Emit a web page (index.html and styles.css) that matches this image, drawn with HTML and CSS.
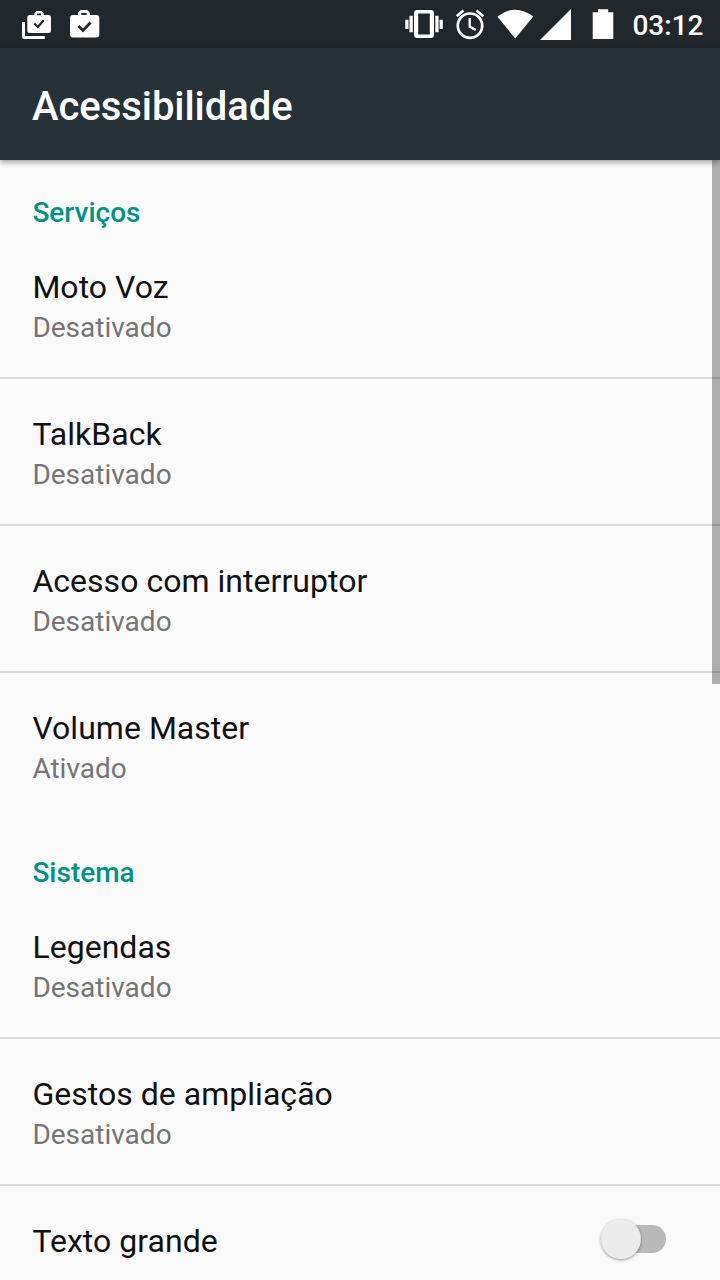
FILE: index.html
```html
<!DOCTYPE html>
<html lang="pt-BR">
<head>
<meta charset="utf-8">
<title>Acessibilidade</title>
<link rel="stylesheet" href="styles.css">
</head>
<body>
<div class="screen">
  <header class="status-bar">
    <svg class="status-icons" width="620" height="48" viewBox="0 0 620 48" fill="#fff" aria-hidden="true">
      <path d="M22 22h3v14h19.7v3H24.5a2.5 2.5 0 0 1-2.5-2.5z"/>
      <path fill-rule="evenodd" d="M34.3 15v-1.700l2.200-2.300h5l2.200 2.300V15H48.500a2.500 2.500 0 0 1 2.500 2.500V30.500a2.500 2.500 0 0 1-2.500 2.500H29.800a2.500 2.500 0 0 1-2.500-2.500V17.500a2.500 2.500 0 0 1 2.500-2.500zM37 15.300h4V13.500h-4z"/>
      <path d="M34.300 23.500l3.500 3.500 6-6.700" fill="none" stroke="#22272b" stroke-width="2.200"/>
      <path fill-rule="evenodd" d="M78 15v-2.500l2.500-2.500h6.700l2.500 2.500V15H96.300a3 3 0 0 1 3 3V34.500a3 3 0 0 1-3 3H73a3 3 0 0 1-3-3V18a3 3 0 0 1 3-3zM81.200 15h5.500V13h-5.500z"/>
      <path d="M78.500 26l4.500 4.500 7.500-8" fill="none" stroke="#22272b" stroke-width="2.800"/>
      <path fill-rule="evenodd" d="M417 10h14a3 3 0 0 1 3 3v22a3 3 0 0 1-3 3h-14a3 3 0 0 1-3-3V13a3 3 0 0 1 3-3zm1.200 3.500v21h11.600v-21zM405.300 19.700h3.200V29h-3.200zM409.500 15.700h3.300v16.600h-3.300zM435.300 15.700h3.300v16.600h-3.300zM439.600 19.700h3.200V29h-3.200z"/>
      <g fill="none" stroke="#fff" stroke-width="2.700"><circle cx="470" cy="25.700" r="12.200"/><path d="M469.700 18v8.500l6 3.600" stroke-width="2.300"/><path d="M456.700 16.200l6.800-5.700M483.300 16.200l-6.800-5.700"/></g>
      <path d="M497.300 16.500q17.900-13.500 36 0L515.200 38.500zM571 9v31h-31zM592.700 12.300h5.300V9.300h10.200v3h5.100V39h-20.600z"/>
    </svg>
    <span class="clock">03:12</span>
  </header>
  <div class="app-bar"><h1>Acessibilidade</h1></div>
  <main class="settings">
    <section class="group">
      <h2>Serviços</h2>
      <div class="item"><div class="title">Moto Voz</div><div class="summary">Desativado</div></div>
      <div class="item"><div class="title">TalkBack</div><div class="summary">Desativado</div></div>
      <div class="item"><div class="title">Acesso com interruptor</div><div class="summary">Desativado</div></div>
      <div class="item"><div class="title">Volume Master</div><div class="summary">Ativado</div></div>
    </section>
    <section class="group">
      <h2>Sistema</h2>
      <div class="item"><div class="title">Legendas</div><div class="summary">Desativado</div></div>
      <div class="item"><div class="title">Gestos de ampliação</div><div class="summary">Desativado</div></div>
      <div class="item toggle-row"><div class="title">Texto grande</div><div class="switch"><div class="thumb"></div></div></div>
    </section>
    <div class="scrollbar"></div>
  </main>
</div>
</body>
</html>
```
FILE: styles.css
```css
* { box-sizing: border-box; }
body { margin: 0; font-family: Roboto, sans-serif; background: #fafafa; }
.screen { width: 720px; height: 1280px; overflow: hidden; display: flex; flex-direction: column; }
.status-bar { height: 48px; flex: none; background: #22272b; color: #fff; display: flex; justify-content: space-between; padding-right: 16.5px; }
.status-icons { flex: none; }
.clock { font-size: 28px; font-weight: 500; line-height: 51px; }
.app-bar { height: 112px; flex: none; background: #263238; color: #fff; display: flex; align-items: center; padding: 4px 32px 0; box-shadow: 0 2px 6px rgba(0,0,0,.4); position: relative; z-index: 1; }
h1 { margin: 0; font-size: 40px; font-weight: 500; letter-spacing: -0.05px; }
.settings { position: relative; flex: 1; min-height: 0; overflow: hidden; padding-top: 16px; }
.group { padding-bottom: 16px; }
h2 { margin: 0; padding: 20px 32px 0 32.4px; height: 56px; font-size: 28px; line-height: 34px; font-weight: 500; color: #009282; }
.item { height: 147px; padding: 35px 32px 0 32.4px; border-bottom: 2px solid #dadada; }
.item:last-child { border-bottom: 0; }
.title { font-size: 32px; line-height: 40px; letter-spacing: 0.03px; color: #111; }
.summary { font-size: 28px; line-height: 42px; color: #757575; }
.toggle-row { display: flex; justify-content: space-between; }
.switch { width: 56px; height: 28px; margin: 4px 22px 0 0; border-radius: 14px; background: #b9b9b9; position: relative; }
.thumb { position: absolute; left: -9px; top: -6px; width: 40px; height: 40px; border-radius: 50%; background: #ececec; box-shadow: 0 1px 3px rgba(0,0,0,.4); }
.scrollbar { position: absolute; right: 0; top: 0; width: 8px; height: 524px; background: rgba(0,0,0,.3); }
```
